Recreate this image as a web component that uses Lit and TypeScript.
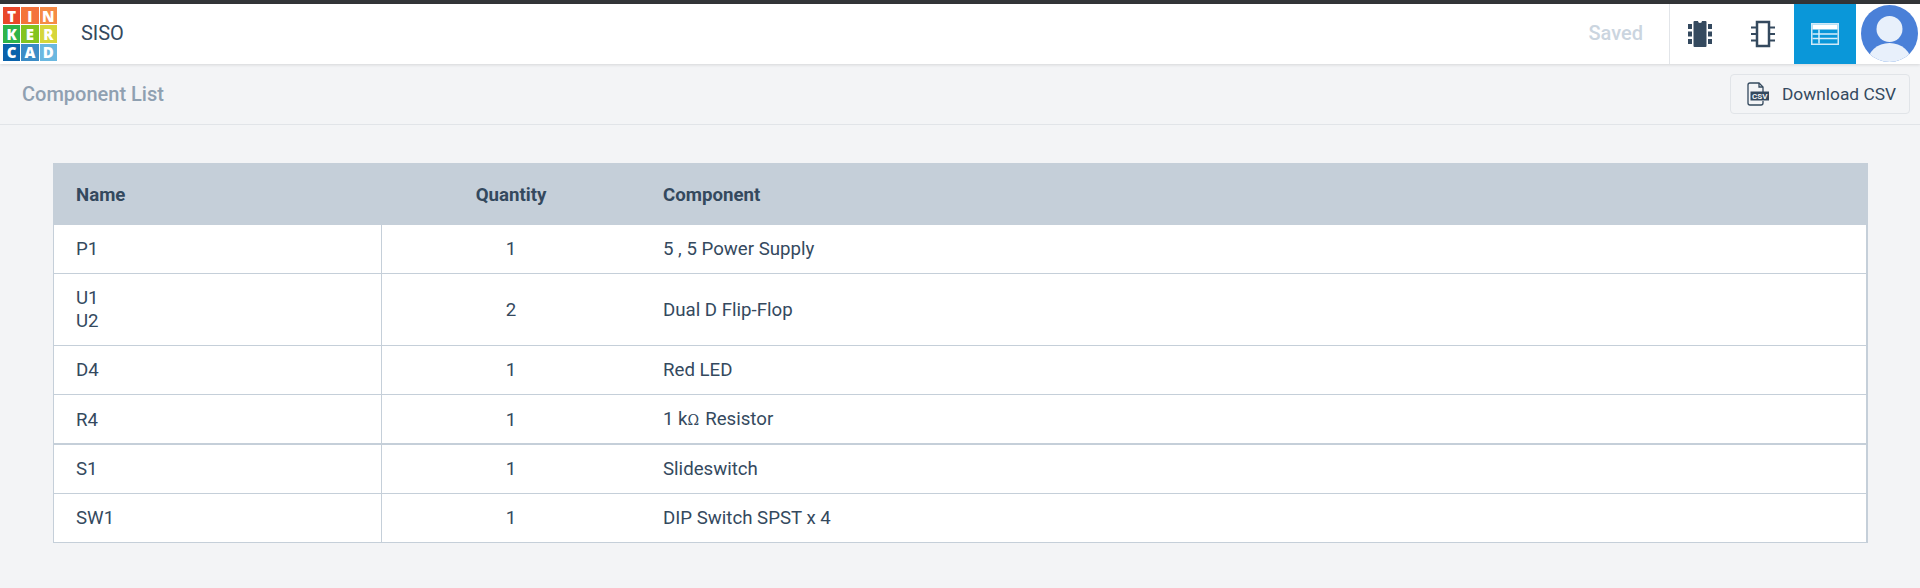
import { LitElement, html, css, svg } from "lit";
import { customElement } from "lit/decorators.js";

const LOGO = [
  ["T", "#e9472a"], ["I", "#f4733b"], ["N", "#f68b45"],
  ["K", "#2eb34a"], ["E", "#84c41f"], ["R", "#d6d63a"],
  ["C", "#0a62ab"], ["A", "#3c8cc6"], ["D", "#6bb8e0"],
];

const ROWS: [string[], string, unknown][] = [
  [["P1"], "1", "5 , 5 Power Supply"],
  [["U1", "U2"], "2", "Dual D Flip-Flop"],
  [["D4"], "1", "Red LED"],
  [["R4"], "1", html`1 k<span class="ohm">Ω</span>Resistor`],
  [["S1"], "1", "Slideswitch"],
  [["SW1"], "1", "DIP Switch SPST x 4"],
];

const chipSolid = svg`<svg width="26" height="28" viewBox="0 0 26 28"><g fill="#34495e"><rect x="1" y="4" width="4" height="5"/><rect x="1" y="11.5" width="4" height="5"/><rect x="1" y="19" width="4" height="5"/><rect x="21" y="4" width="4" height="5"/><rect x="21" y="11.5" width="4" height="5"/><rect x="21" y="19" width="4" height="5"/><path d="M7.500 1h3.500a2 2 0 0 0 4 0h3.500a1 1 0 0 1 1 1v24a1 1 0 0 1-1 1h-11a1 1 0 0 1-1-1v-24a1 1 0 0 1 1-1z"/></g></svg>`;
const chipOutline = svg`<svg width="26" height="28" viewBox="0 0 26 28"><g fill="none" stroke="#34495e"><rect x="7" y="2" width="12" height="24" stroke-width="2.500"/><path stroke-width="2.200" d="M1 7.500h5M1 14h5M1 20.500h5M20 7.500h5M20 14h5M20 20.500h5"/></g></svg>`;
const tableIcon = svg`<svg width="28" height="22" viewBox="0 0 28 22"><rect width="28" height="22" fill="#cfe8f7"/><rect x="1.500" y="1.500" width="25" height="19" fill="#0a97d9"/><rect x="1.500" y="1.500" width="25" height="5" fill="#fff"/><path d="M1.500 11h25M1.500 15.500h25M8 6.500v14" stroke="#d8eefa" stroke-width="1.500" fill="none"/></svg>`;
const avatar = svg`<svg width="57" height="57" viewBox="0 0 57 57"><defs><clipPath id="c"><circle cx="28.500" cy="28.500" r="28.500"/></clipPath></defs><circle cx="28.500" cy="28.500" r="28.500" fill="#4a80d8"/><g clip-path="url(#c)" fill="#e8f0fb"><circle cx="28.500" cy="24" r="13"/><ellipse cx="28.500" cy="58" rx="22" ry="20"/></g></svg>`;
const csvIcon = svg`<svg width="22" height="24" viewBox="0 0 22 24"><path d="M16 10V5l-4-4H3a2 2 0 0 0-2 2v18a2 2 0 0 0 2 2h11a2 2 0 0 0 2-2v-2" fill="none" stroke="#34495e" stroke-width="1.300"/><path d="M12 1v4h4" fill="none" stroke="#34495e" stroke-width="1.300"/><rect x="3.500" y="9.500" width="18.500" height="9" fill="#34495e"/><text x="12.700" y="16.800" font-size="8" font-weight="700" text-anchor="middle" fill="#f3f4f6" font-family="Roboto, sans-serif">CSV</text></svg>`;

@customElement("app-root")
export class AppRoot extends LitElement {
  static styles = css`
    :host { display: block; height: 588px; background: #f3f4f6; font-family: Roboto, "Liberation Sans", sans-serif; color: #34495e; font-size: 18.67px; overflow: hidden; }
    .topline { height: 4px; background: #333538; }
    .header { height: 60px; background: #fff; display: flex; align-items: stretch; box-shadow: 0 1px 3px rgba(0,0,0,.12); position: relative; }
    .logo { display: grid; grid-template-columns: repeat(3, 17.300px); grid-auto-rows: 17.300px; gap: 1px; padding: 3px 0 0 3px; align-self: flex-start; }
    .cell { display: flex; align-items: center; justify-content: center; color: #fff; font: 800 15px "Open Sans", Roboto, sans-serif; }
    .title { margin-left: 24px; align-self: center; font-size: 20px; line-height: 20px; margin-top: -2px; }
    .spacer { flex: 1; }
    .saved { align-self: center; font-weight: 500; font-size: 20px; color: #cbd5df; margin-right: 26px; margin-top: -2px; }
    .tab { width: 62px; display: flex; align-items: center; justify-content: center; }
    .tab.first { border-left: 1px solid #e2e5e9; width: 63px; box-sizing: border-box; padding-right: 2px; }
    .tab.second { padding-right: 1px; box-sizing: border-box; }
    .tab.active { background: #0a97d9; }
    .user { width: 63px; display: flex; justify-content: flex-start; padding: 1px 0 0 4px; margin-left: 1px; box-sizing: border-box; }
    .sub { height: 60px; border-bottom: 1px solid #e1e4e8; display: flex; align-items: center; justify-content: space-between; padding: 0 10px 0 22px; }
    .sub h1 { margin: 0; font-size: 20px; font-weight: 500; color: #8fa0b1; }
    .btn { width: 180px; height: 40px; box-sizing: border-box; border: 1px solid #e1e4e8; border-radius: 4px; display: flex; align-items: center; gap: 13px; padding-left: 16px; font-size: 17.33px; color: #34495e; }
    .wrap { padding: 38px 0 0 53px; }
    table { width: 1815px; border-collapse: separate; border-spacing: 0; table-layout: fixed; background: #fff; border-right: 2px solid #c5cfd9; border-left: 1px solid #c5cfd9; }
    th { background: #c5cfd9; height: 62px; padding: 2px 0 0; font-weight: 700; text-align: left; box-sizing: border-box; }
    td { height: 49px; padding: 0; box-sizing: border-box; border-bottom: 1px solid #c5cfd9; line-height: 23px; vertical-align: middle; }
    tr.tall td { height: 72px; }
    tr.tall td.c2, tr.tall td.c3 { padding-top: 2px; }
    tr.heavy td { height: 50px; border-bottom-width: 2px; padding-top: 2px; }
    .c1 { width: 328px; padding-left: 22px; border-right: 1px solid #c5cfd9; }
    th.c1 { border-right: none; }
    .c2 { width: 258px; text-align: center; }
    .c3 { padding-left: 23px; }
    .ohm { font-family: "DejaVu Serif", serif; font-size: 14px; margin-right: 6px; }
  `;

  render() {
    return html`
      <div class="topline"></div>
      <header class="header">
        <div class="logo">${LOGO.map(([l, c]) => html`<span class="cell" style="background:${c}">${l}</span>`)}</div>
        <div class="title">SISO</div>
        <div class="spacer"></div>
        <div class="saved">Saved</div>
        <div class="tab first">${chipSolid}</div>
        <div class="tab second">${chipOutline}</div>
        <div class="tab active">${tableIcon}</div>
        <div class="user">${avatar}</div>
      </header>
      <div class="sub">
        <h1>Component List</h1>
        <div class="btn">${csvIcon}<span>Download CSV</span></div>
      </div>
      <div class="wrap">
        <table>
          <thead><tr><th class="c1">Name</th><th class="c2">Quantity</th><th class="c3">Component</th></tr></thead>
          <tbody>
            ${ROWS.map(([names, q, comp], i) => html`
              <tr class="${names.length > 1 ? "tall" : ""} ${i === 3 ? "heavy" : ""}">
                <td class="c1">${names.map((n) => html`<div>${n}</div>`)}</td>
                <td class="c2">${q}</td>
                <td class="c3">${comp}</td>
              </tr>`)}
          </tbody>
        </table>
      </div>
    `;
  }
}
